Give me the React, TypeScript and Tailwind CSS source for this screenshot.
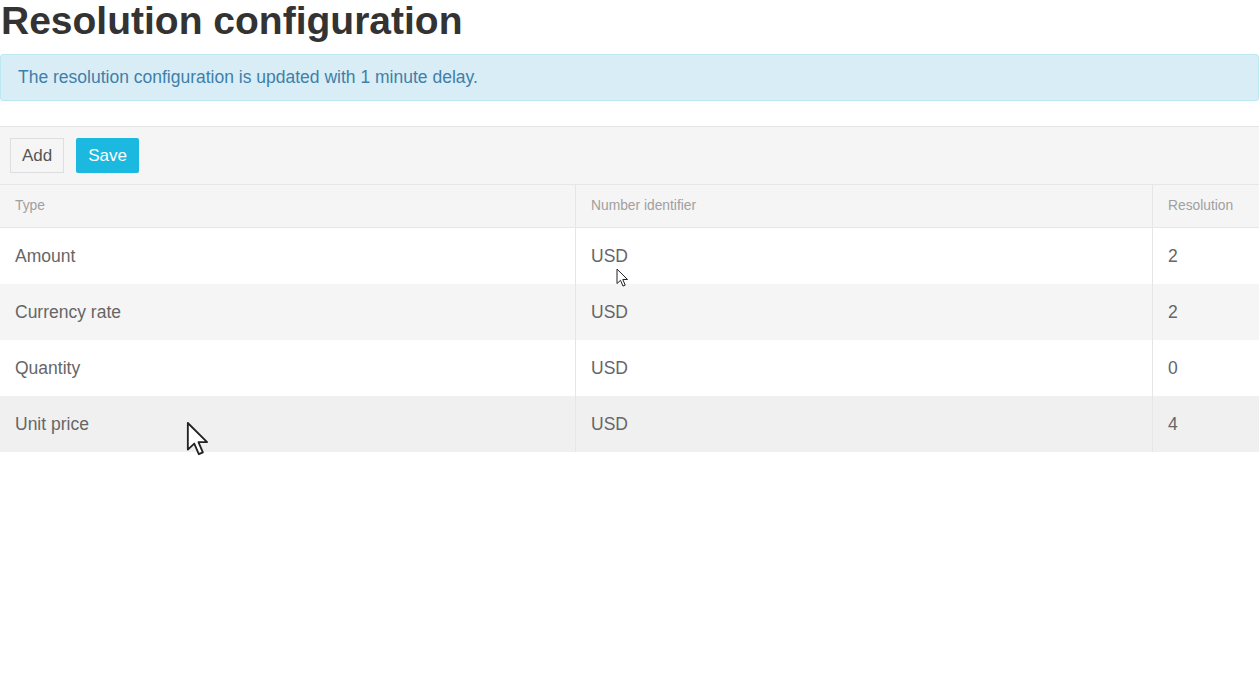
import React from "react"

const rows = [
  { type: "Amount", id: "USD", res: "2" },
  { type: "Currency rate", id: "USD", res: "2" },
  { type: "Quantity", id: "USD", res: "0" },
  { type: "Unit price", id: "USD", res: "4" },
]

function Cursor({ size }: { size: number }) {
  return (
    <svg width={size} height={size * 1.6} viewBox="0 0 12 19" fill="none">
      <path
        d="M1 1 L1 15.5 L4.5 12.2 L7 18 L9.2 17 L6.8 11.4 L11.5 11.4 Z"
        fill="#fff"
        stroke="#222"
        strokeWidth="1"
        strokeLinejoin="round"
      />
    </svg>
  )
}

export default function App() {
  return (
    <div className="relative h-[682px] w-[1259px] overflow-hidden bg-white font-['Liberation_Sans',Arial,sans-serif] text-[#333]">
      <h1 className="m-0 h-[54px] pl-px text-[39px] font-bold leading-[42px] text-[#333]">
        Resolution configuration
      </h1>
      <div className="flex h-[47px] items-center rounded-[3px] border border-[#bce8f1] bg-[#d9edf7] pl-[17px] text-[17.5px] text-[#3f80a8]">
        The resolution configuration is updated with 1 minute delay.
      </div>
      <div className="mt-[25px] flex h-[58px] items-center gap-[12px] border-t border-[#e6e6e6] bg-[#f5f5f5] pl-[10px]">
        <button className="flex h-[35px] w-[54px] items-center justify-center border border-[#dedede] bg-[#f5f5f5] text-[17px] text-[#555]">
          Add
        </button>
        <button className="flex h-[35px] w-[63px] items-center justify-center rounded-[2px] bg-[#1bb8e0] text-[17px] text-white">
          Save
        </button>
      </div>
      <div className="grid grid-cols-[576px_577px_1fr]">
        {["Type", "Number identifier", "Resolution"].map((h, i) => (
          <div
            key={h}
            className={`flex h-[44px] items-center border-y border-[#e6e6e6] bg-[#f5f5f5] pl-[15px] text-[13.8px] text-[#a0a0a0] ${i < 2 ? "border-r" : ""}`}
          >
            {h}
          </div>
        ))}
        {rows.map((r, ri) => {
          const bg = ri === 3 ? "bg-[#f0f0f0]" : ri % 2 === 1 ? "bg-[#f5f5f5]" : "bg-white"
          return [r.type, r.id, r.res].map((c, ci) => (
            <div
              key={ri + "-" + ci}
              className={`flex h-[56px] items-center pl-[15px] pt-px text-[17.5px] text-[#666] ${bg} ${ci < 2 ? "border-r border-[#e6e6e6]" : ""}`}
            >
              {c}
            </div>
          ))
        })}
      </div>
      <div className="absolute left-[616px] top-[268px]">
        <Cursor size={12} />
      </div>
      <div className="absolute left-[186px] top-[421px]">
        <Cursor size={22} />
      </div>
    </div>
  )
}
